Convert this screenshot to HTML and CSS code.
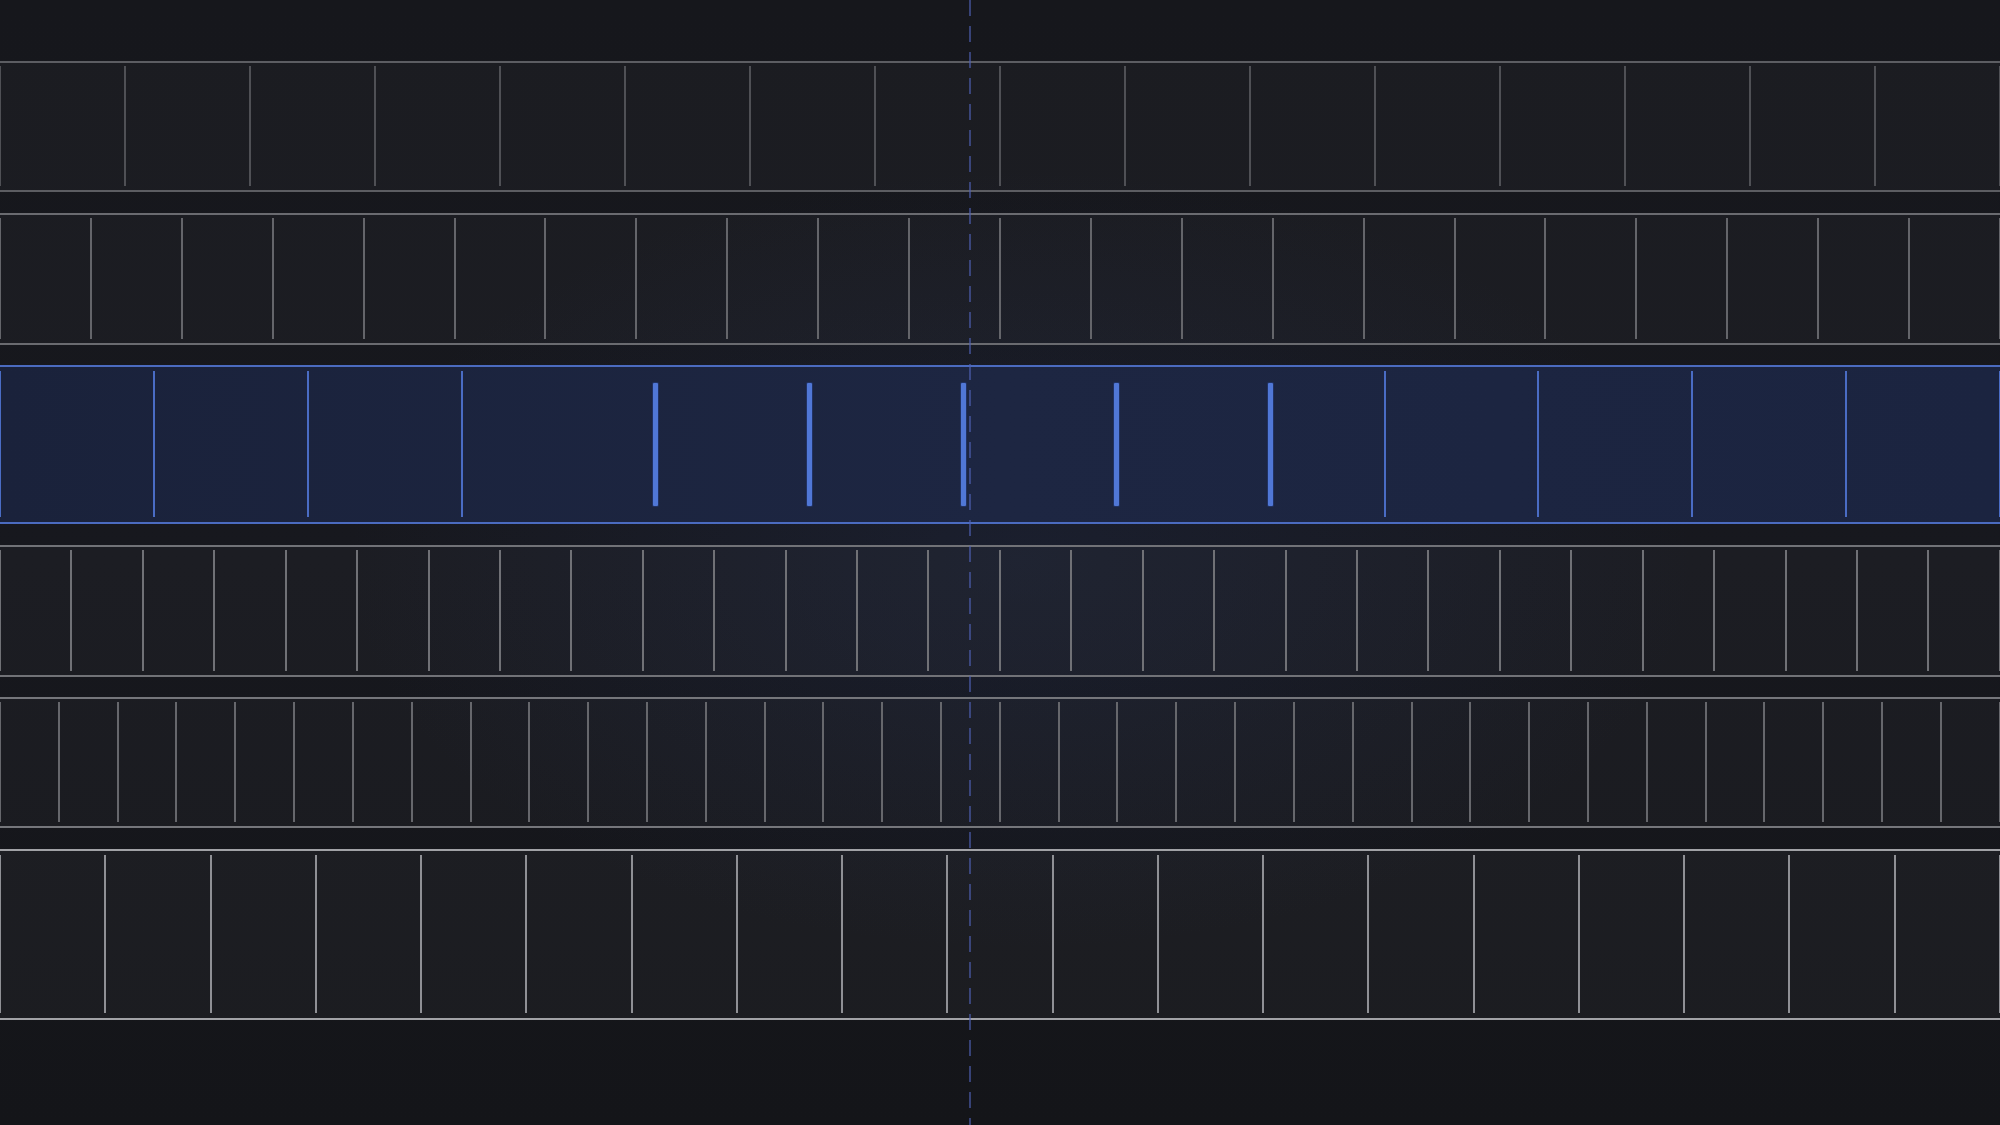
FILE: index.html
```html
<!DOCTYPE html>
<html lang="en">
<head>
<meta charset="utf-8">
<title>Tracks</title>
<link rel="stylesheet" href="styles.css">
</head>
<body>
<div class="stage">
  <main class="tracks">
    <!-- 16 divisions -->
    <section class="track track--dim">
      <div class="ticks">
        <span class="tick"></span><span class="tick"></span><span class="tick"></span><span class="tick"></span>
        <span class="tick"></span><span class="tick"></span><span class="tick"></span><span class="tick"></span>
        <span class="tick"></span><span class="tick"></span><span class="tick"></span><span class="tick"></span>
        <span class="tick"></span><span class="tick"></span><span class="tick"></span><span class="tick"></span>
        <span class="tick"></span>
      </div>
    </section>

    <!-- 22 divisions -->
    <section class="track track--mid">
      <div class="ticks">
        <span class="tick"></span><span class="tick"></span><span class="tick"></span><span class="tick"></span>
        <span class="tick"></span><span class="tick"></span><span class="tick"></span><span class="tick"></span>
        <span class="tick"></span><span class="tick"></span><span class="tick"></span><span class="tick"></span>
        <span class="tick"></span><span class="tick"></span><span class="tick"></span><span class="tick"></span>
        <span class="tick"></span><span class="tick"></span><span class="tick"></span><span class="tick"></span>
        <span class="tick"></span><span class="tick"></span><span class="tick"></span>
      </div>
    </section>

    <!-- 13 divisions, selected, five markers being dragged -->
    <section class="track track--selected">
      <div class="ticks">
        <span class="tick"></span><span class="tick"></span><span class="tick"></span><span class="tick"></span>
        <span class="tick tick--drag"></span><span class="tick tick--drag"></span><span class="tick tick--drag"></span>
        <span class="tick tick--drag"></span><span class="tick tick--drag"></span>
        <span class="tick"></span><span class="tick"></span><span class="tick"></span><span class="tick"></span>
        <span class="tick"></span>
      </div>
    </section>

    <!-- 28 divisions -->
    <section class="track track--mid track--tall-a">
      <div class="ticks">
        <span class="tick"></span><span class="tick"></span><span class="tick"></span><span class="tick"></span>
        <span class="tick"></span><span class="tick"></span><span class="tick"></span><span class="tick"></span>
        <span class="tick"></span><span class="tick"></span><span class="tick"></span><span class="tick"></span>
        <span class="tick"></span><span class="tick"></span><span class="tick"></span><span class="tick"></span>
        <span class="tick"></span><span class="tick"></span><span class="tick"></span><span class="tick"></span>
        <span class="tick"></span><span class="tick"></span><span class="tick"></span><span class="tick"></span>
        <span class="tick"></span><span class="tick"></span><span class="tick"></span><span class="tick"></span>
        <span class="tick"></span>
      </div>
    </section>

    <!-- 34 divisions -->
    <section class="track track--mid track--fine">
      <div class="ticks">
        <span class="tick"></span><span class="tick"></span><span class="tick"></span><span class="tick"></span>
        <span class="tick"></span><span class="tick"></span><span class="tick"></span><span class="tick"></span>
        <span class="tick"></span><span class="tick"></span><span class="tick"></span><span class="tick"></span>
        <span class="tick"></span><span class="tick"></span><span class="tick"></span><span class="tick"></span>
        <span class="tick"></span><span class="tick"></span><span class="tick"></span><span class="tick"></span>
        <span class="tick"></span><span class="tick"></span><span class="tick"></span><span class="tick"></span>
        <span class="tick"></span><span class="tick"></span><span class="tick"></span><span class="tick"></span>
        <span class="tick"></span><span class="tick"></span><span class="tick"></span><span class="tick"></span>
        <span class="tick"></span><span class="tick"></span><span class="tick"></span>
      </div>
    </section>

    <!-- 19 divisions -->
    <section class="track track--bright">
      <div class="ticks">
        <span class="tick"></span><span class="tick"></span><span class="tick"></span><span class="tick"></span>
        <span class="tick"></span><span class="tick"></span><span class="tick"></span><span class="tick"></span>
        <span class="tick"></span><span class="tick"></span><span class="tick"></span><span class="tick"></span>
        <span class="tick"></span><span class="tick"></span><span class="tick"></span><span class="tick"></span>
        <span class="tick"></span><span class="tick"></span><span class="tick"></span><span class="tick"></span>
      </div>
    </section>
  </main>

  <div class="playhead"></div>
</div>
</body>
</html>
```

FILE: styles.css
```css
* {
  box-sizing: border-box;
}

html,
body {
  margin: 0;
  height: 100%;
}

body {
  background: #141519;
  overflow: hidden;
  font-family: "Inter", "Liberation Sans", sans-serif;
}

.stage {
  position: relative;
  width: 2000px;
  height: 1125px;
  overflow: hidden;
  background:
    radial-gradient(ellipse 900px 520px at 1020px 560px, rgba(40, 58, 110, 0.2), rgba(40, 58, 110, 0) 75%),
    linear-gradient(180deg, #16171c 0%, #17181e 50%, #141519 100%);
}

/* ---------- track stack ---------- */

.tracks {
  display: flex;
  flex-direction: column;
  gap: 20.5px;
  padding-top: 61px;
}

.track {
  height: 132px;
  padding: 3px 0 4px;
  border-top: 2px solid #5d5e63;
  border-bottom: 2px solid #5d5e63;
  background: rgba(255, 255, 255, 0.022);
  overflow: hidden;
}

.ticks {
  display: flex;
  justify-content: space-between;
  align-items: stretch;
  height: 100%;
  margin: 0 -1px;
}

.tick {
  width: 2px;
  flex: none;
  background: #55565b;
}

/* ---------- track variants ---------- */

.track--dim {
  height: 131px;
  border-color: #5c5d62;
}

.track--dim .tick {
  background: #4f5055;
}

.track--mid {
  border-color: #6a6b70;
}

.track--mid .tick {
  background: #64656a;
}

.track--tall-a {
  border-color: #717277;
}

.track--tall-a .tick {
  background: #707176;
}

.track--fine {
  height: 131px;
  border-color: #75767b;
}

.track--fine .tick {
  background: #66676c;
}

.track--bright {
  height: 171px;
  padding: 4px 0 5px;
  border-color: #a1a2a6;
  background: rgba(255, 255, 255, 0.03);
}

.track--bright .tick {
  background: #8f9095;
}

/* selected track */

.track--selected {
  height: 159px;
  padding: 4px 0 5px;
  border-color: #4b6bc0;
  background: linear-gradient(90deg, #1a223b 0%, #1d2642 50%, #1b2440 100%);
}

.track--selected .tick {
  background: #4a6cc4;
}

.track--selected .tick--drag {
  width: 5px;
  margin: 12px -1.5px 11px;
  border-radius: 1px;
  background: #5077d6;
  box-shadow: 0 0 0 1px rgba(36, 56, 112, 0.7);
  transform: translateX(40px);
}

/* ---------- playhead ---------- */

.playhead {
  position: absolute;
  top: 0;
  bottom: 0;
  left: 969px;
  width: 2px;
  background: repeating-linear-gradient(
    180deg,
    rgba(78, 96, 180, 0.6) 0px,
    rgba(78, 96, 180, 0.6) 16px,
    transparent 16px,
    transparent 26px
  );
  pointer-events: none;
}
```
